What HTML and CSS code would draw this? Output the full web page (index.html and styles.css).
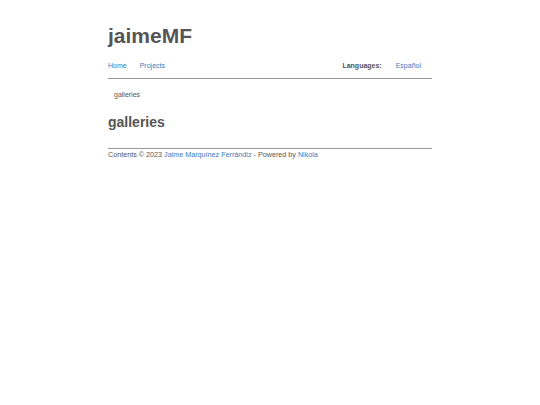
FILE: index.html
```html
<!DOCTYPE html>
<html>
<head>
<meta charset="utf-8">
<link rel="stylesheet" href="styles.css">
</head>
<body>
<div class="page">
  <header class="header">
    <h1 class="brand">jaimeMF</h1>
    <nav class="nav">
      <div class="nav-left">
        <a href="#">Home</a>
        <a href="#">Projects</a>
      </div>
      <div class="nav-right">
        <span class="lang-label">Languages:</span>
        <a href="#">Español</a>
      </div>
    </nav>
  </header>
  <div class="crumbs">galleries</div>
  <h2 class="title">galleries</h2>
  <footer class="footer"><span class="muted">Contents © 2023</span> <a href="#">Jaime Marquínez Ferrándiz</a> <span class="muted">- Powered by</span> <a href="#">Nikola</a></footer>
</div>
</body>
</html>
```
FILE: styles.css
```css
html, body { margin: 0; padding: 0; background: #fff; }
body { font-family: "Liberation Sans", Arial, sans-serif; color: #555; }
a { color: #3a7bc0; text-decoration: none; }
.page { width: 324px; margin: 0 auto; padding-top: 22px; }
.brand { margin: 0; font-size: 21px; font-weight: bold; color: #555; line-height: 28px; }
.nav { display: flex; justify-content: space-between; font-size: 7px; line-height: 10px; margin-top: 11px; padding-bottom: 7px; border-bottom: 1px solid #999; }
.nav-left { display: flex; gap: 13px; }
.nav-right { display: flex; gap: 14px; padding-right: 11px; }
.lang-label { font-weight: bold; color: #555; }
.crumbs { font-size: 7px; color: #555; padding-left: 6px; margin-top: 11px; line-height: 9px; }
.title { margin: 14px 0 0; font-size: 14px; font-weight: bold; color: #555; line-height: 18px; }
.footer { margin-top: 17px; border-top: 1px solid #999; padding-top: 1px; font-size: 7.2px; line-height: 9px; color: #555; }
.muted { color: #555; }
```
